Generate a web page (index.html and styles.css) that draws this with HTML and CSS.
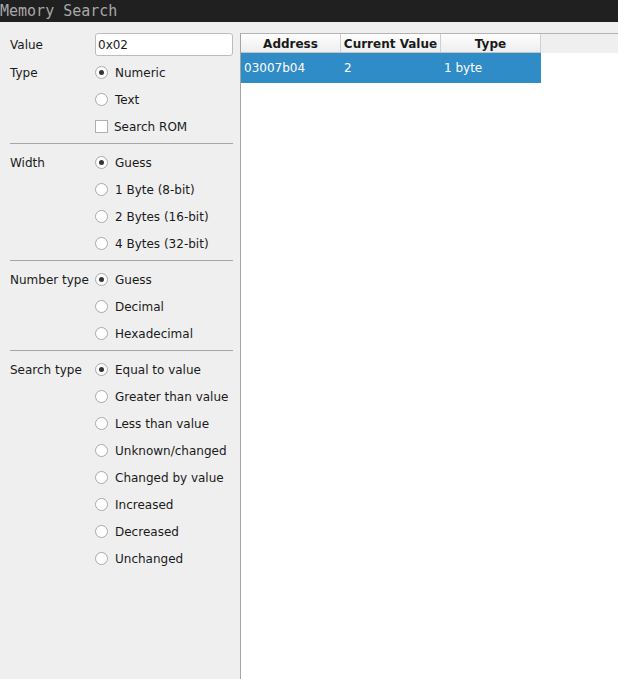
FILE: index.html
```html
<!DOCTYPE html>
<html>
<head>
<meta charset="utf-8">
<link rel="stylesheet" href="styles.css">
</head>
<body>
<div class="titlebar">Memory Search</div>
<div class="main">
  <div class="form">
    <div class="group first">
      <div class="label top">Value</div>
      <div class="ctl top"><input class="textbox" type="text" value="0x02"></div>
      <div class="label">Type</div>
      <div class="ctl"><span class="radio on"></span>Numeric</div>
      <div class="label"></div>
      <div class="ctl"><span class="radio"></span>Text</div>
      <div class="label"></div>
      <div class="ctl"><span class="check"></span>Search ROM</div>
    </div>
    <div class="sep"></div>
    <div class="group">
      <div class="label">Width</div>
      <div class="ctl"><span class="radio on"></span>Guess</div>
      <div class="label"></div>
      <div class="ctl"><span class="radio"></span>1 Byte (8-bit)</div>
      <div class="label"></div>
      <div class="ctl"><span class="radio"></span>2 Bytes (16-bit)</div>
      <div class="label"></div>
      <div class="ctl"><span class="radio"></span>4 Bytes (32-bit)</div>
    </div>
    <div class="sep"></div>
    <div class="group">
      <div class="label">Number type</div>
      <div class="ctl"><span class="radio on"></span>Guess</div>
      <div class="label"></div>
      <div class="ctl"><span class="radio"></span>Decimal</div>
      <div class="label"></div>
      <div class="ctl"><span class="radio"></span>Hexadecimal</div>
    </div>
    <div class="sep"></div>
    <div class="group">
      <div class="label">Search type</div>
      <div class="ctl"><span class="radio on"></span>Equal to value</div>
      <div class="label"></div>
      <div class="ctl"><span class="radio"></span>Greater than value</div>
      <div class="label"></div>
      <div class="ctl"><span class="radio"></span>Less than value</div>
      <div class="label"></div>
      <div class="ctl"><span class="radio"></span>Unknown/changed</div>
      <div class="label"></div>
      <div class="ctl"><span class="radio"></span>Changed by value</div>
      <div class="label"></div>
      <div class="ctl"><span class="radio"></span>Increased</div>
      <div class="label"></div>
      <div class="ctl"><span class="radio"></span>Decreased</div>
      <div class="label"></div>
      <div class="ctl"><span class="radio"></span>Unchanged</div>
    </div>
  </div>
  <div class="tableframe">
    <div class="thead">
      <div class="th">Address</div>
      <div class="th">Current Value</div>
      <div class="th">Type</div>
      <div class="thfill"></div>
    </div>
    <div class="trow selected">
      <div class="td">03007b04</div>
      <div class="td">2</div>
      <div class="td">1 byte</div>
    </div>
  </div>
</div>
</body>
</html>
```
FILE: styles.css
```css
html, body {
  margin: 0;
  padding: 0;
  height: 100%;
}
body {
  background: #efefef;
  font-family: "DejaVu Sans", sans-serif;
  font-size: 12px;
  color: #1a1a1a;
  display: flex;
  flex-direction: column;
  overflow: hidden;
}
.titlebar {
  height: 22px;
  background: #202020;
  color: #a8a8a8;
  font-family: "DejaVu Sans Mono", monospace;
  font-size: 15px;
  line-height: 22px;
  padding-left: 0;
  flex: none;
}
.main {
  flex: 1;
  display: flex;
  min-height: 0;
}
.form {
  width: 240px;
  flex: none;
  padding-top: 9px;
  box-sizing: border-box;
}
.group {
  display: grid;
  grid-template-columns: 85px 138px;
  grid-auto-rows: 27px;
  padding-left: 10px;
}
.group.first {
  grid-template-rows: 28px;
}
.label {
  display: flex;
  align-items: center;
  white-space: nowrap;
}
.ctl {
  display: flex;
  align-items: center;
  white-space: nowrap;
}
.label.top {
  align-items: flex-start;
  padding-top: 3px;
  line-height: 23px;
}
.ctl.top {
  align-items: flex-start;
  padding-top: 2px;
}
.textbox {
  width: 138px;
  height: 23px;
  box-sizing: border-box;
  border: 1px solid #bcbcbc;
  border-radius: 3px;
  background: #fff;
  font-family: "DejaVu Sans", sans-serif;
  font-size: 12px;
  color: #1a1a1a;
  padding: 1px 2px 0;
  margin: 0;
  outline: none;
}
.radio {
  width: 13px;
  height: 13px;
  box-sizing: border-box;
  border: 1px solid #a9a9a9;
  border-radius: 50%;
  background: #fff;
  margin-right: 7px;
  position: relative;
  flex: none;
}
.radio.on::after {
  content: "";
  position: absolute;
  left: 3px;
  top: 3px;
  width: 5px;
  height: 5px;
  border-radius: 50%;
  background: #333;
}
.check {
  width: 13px;
  height: 13px;
  box-sizing: border-box;
  border: 1px solid #b0b0b0;
  background: #fff;
  margin-right: 6px;
  flex: none;
}
.sep {
  height: 1px;
  background: #a6a6a6;
  margin: 3px 7px 5px 10px;
}
.tableframe {
  flex: 1;
  margin-top: 11px;
  border-left: 1px solid #a4a4a4;
  border-top: 1px solid #b4b4b4;
  background: #fff;
}
.thead {
  display: flex;
  height: 19px;
  background: #efefef;
}
.th {
  width: 100px;
  flex: none;
  border-right: 1px solid #cfcfcf;
  border-bottom: 1px solid #c4c4c4;
  background: linear-gradient(#fefefe, #eeeeee);
  font-weight: bold;
  text-align: center;
  line-height: 18px;
  padding-top: 1px;
  box-sizing: border-box;
  height: 19px;
}
.th:last-of-type {
  border-right: 1px solid #e0e0e0;
}
.thfill {
  flex: 1;
}
.trow {
  display: flex;
  height: 30px;
  width: 300px;
}
.trow.selected {
  background: #308cc6;
  color: #fff;
}
.td {
  width: 100px;
  flex: none;
  padding-left: 3px;
  box-sizing: border-box;
  line-height: 30px;
}
```
